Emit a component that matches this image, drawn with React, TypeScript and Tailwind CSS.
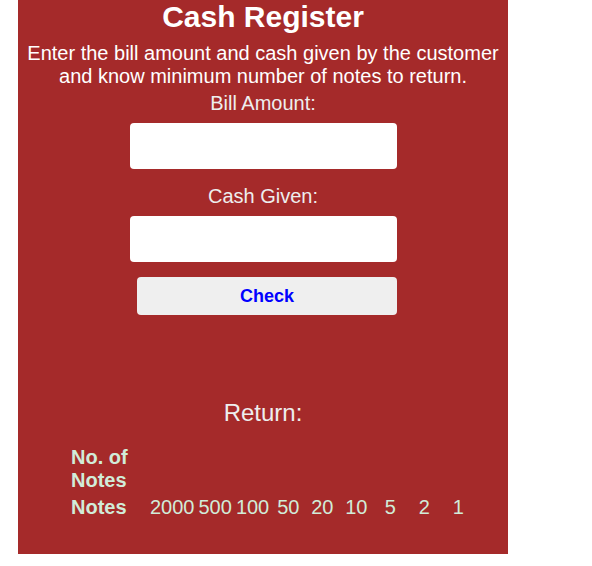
export default function App() {
  const notes = [2000, 500, 100, 50, 20, 10, 5, 2, 1]

  return (
    <main className="min-h-screen bg-white font-['Liberation_Sans',Arial,sans-serif]">
      {/* Panel */}
      <div className="ml-[18px] w-[490px] bg-[#a52a2a] pb-[32px] text-center">
        <h1 className="text-[30px] font-bold leading-[34px] text-white">Cash Register</h1>
        <p className="mt-[8px] text-[20px] leading-[23px] text-white">
          Enter the bill amount and cash given by the customer and know minimum number of notes to return.
        </p>

        <label className="mt-[4px] block text-[20px] leading-[23px] text-[#eeeeee]">Bill Amount:</label>
        <input className="mx-auto mt-[8px] block h-[46px] w-[267px] rounded-[4px] bg-white outline-none" />

        <label className="mt-[16px] block text-[20px] leading-[23px] text-[#eeeeee]">Cash Given:</label>
        <input className="mx-auto mt-[8px] block h-[46px] w-[267px] rounded-[4px] bg-white outline-none" />

        <button className="ml-[119px] mt-[15px] block h-[38px] w-[260px] rounded-[4px] bg-[#efefef] text-[18px] font-bold text-[#0000ff]">
          Check
        </button>

        <div className="mt-[84px] text-[24px] leading-[28px] text-[#eeeeee]">Return:</div>

        {/* Notes table */}
        <table className="ml-[50px] mt-[16px] border-separate border-spacing-[2px] text-[20px] leading-[23px] text-[#d1ecd9]">
          <tbody>
            <tr>
              <th className="w-[77px] p-[1px] text-left font-bold">No. of Notes</th>
              {notes.map((n) => (
                <td key={n} className="w-[32px] p-[1px]"></td>
              ))}
            </tr>
            <tr>
              <th className="w-[77px] p-[1px] text-left font-bold">Notes</th>
              {notes.map((n) => (
                <td key={n} className="w-[32px] p-[1px] text-center">
                  {n}
                </td>
              ))}
            </tr>
          </tbody>
        </table>
      </div>
    </main>
  )
}
